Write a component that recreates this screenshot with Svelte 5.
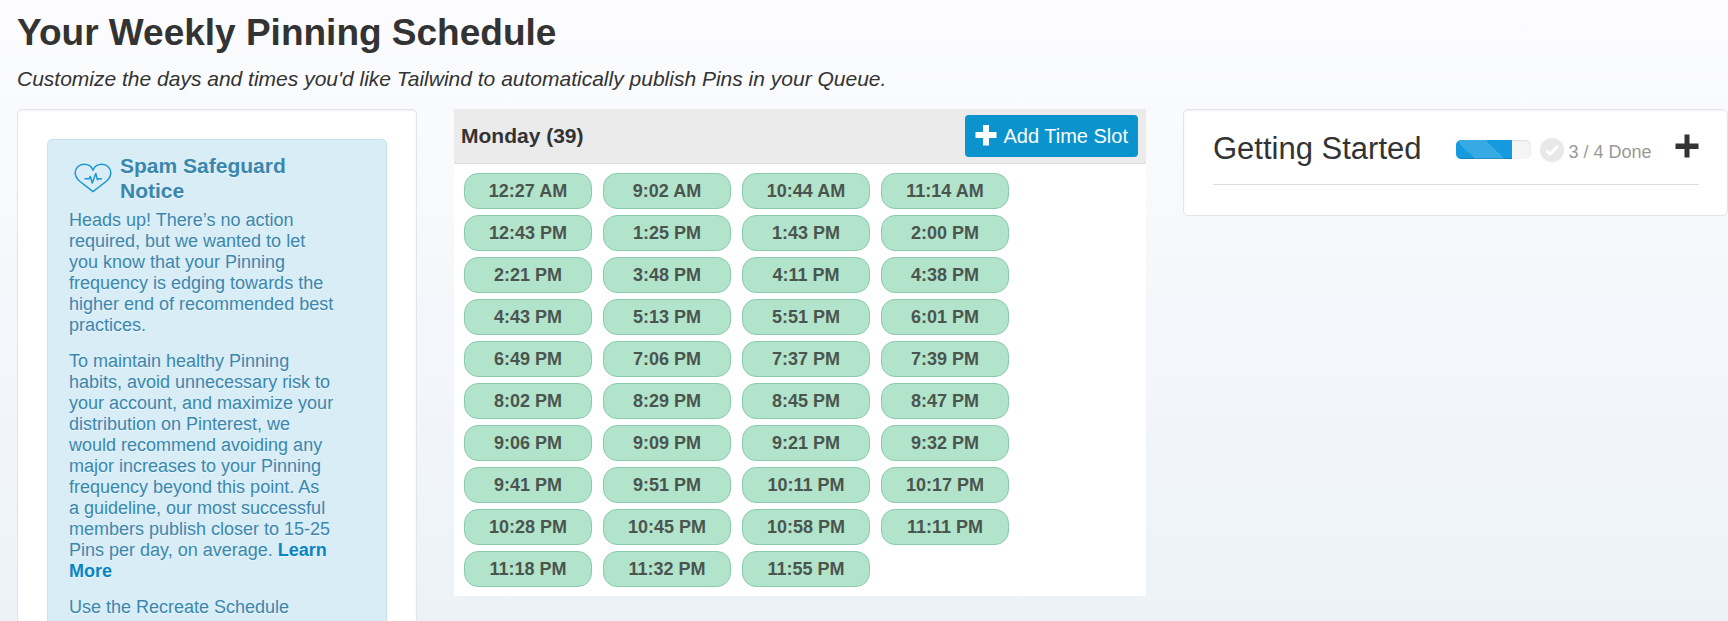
<script>
  const times = [
    '12:27 AM', '9:02 AM', '10:44 AM', '11:14 AM',
    '12:43 PM', '1:25 PM', '1:43 PM', '2:00 PM',
    '2:21 PM', '3:48 PM', '4:11 PM', '4:38 PM',
    '4:43 PM', '5:13 PM', '5:51 PM', '6:01 PM',
    '6:49 PM', '7:06 PM', '7:37 PM', '7:39 PM',
    '8:02 PM', '8:29 PM', '8:45 PM', '8:47 PM',
    '9:06 PM', '9:09 PM', '9:21 PM', '9:32 PM',
    '9:41 PM', '9:51 PM', '10:11 PM', '10:17 PM',
    '10:28 PM', '10:45 PM', '10:58 PM', '11:11 PM',
    '11:18 PM', '11:32 PM', '11:55 PM'
  ];

  let done = 3;
  let total = 4;

  $: percent = (done / total) * 100;
</script>

<main class="page">
  <h1>Your Weekly Pinning Schedule</h1>
  <p class="subtitle">Customize the days and times you'd like Tailwind to automatically publish Pins in your Queue.</p>

  <div class="columns">
    <aside class="card">
      <div class="notice">
        <div class="notice-head">
          <svg class="heart" viewBox="0 0 38 30" aria-hidden="true">
            <path d="M19 28.600L6 18.500C3 16 1.200 13.500 1.200 9.800C1.200 5 5.200 1.300 10 1.300C14.500 1.300 17.700 3.900 19 7.200C20.300 3.900 23.500 1.300 28 1.300C32.800 1.300 36.800 5 36.800 9.800C36.800 13.500 35 16 32 18.500Z" />
            <path d="M10.500 15.800H15L16.300 13.500L18.300 20L21.800 10.500L23.500 16.800L24.500 15.800H28" />
          </svg>
          <h2>Spam Safeguard Notice</h2>
        </div>
        <p>Heads up! There’s no action required, but we wanted to let you know that your Pinning frequency is edging towards the higher end of recommended best practices.</p>
        <p>To maintain healthy Pinning habits, avoid unnecessary risk to your account, and maximize your distribution on Pinterest, we would recommend avoiding any major increases to your Pinning frequency beyond this point. As a&nbsp;guideline, our most successful members publish closer to 15-25 Pins per day, on average. <a href="#learn-more">Learn More</a></p>
        <p>Use the Recreate Schedule</p>
      </div>
    </aside>

    <section class="schedule">
      <header class="day-header">
        <h2>Monday ({times.length})</h2>
        <button class="add-button">
          <svg class="plus" viewBox="0 0 22 22" aria-hidden="true">
            <path d="M8 1h6v7h7.500v6h-7.500v7.500h-6v-7.500h-7.500v-6h7.500z" />
          </svg>
          Add Time Slot
        </button>
      </header>
      <div class="slots">
        {#each times as time}
          <button class="slot">{time}</button>
        {/each}
      </div>
    </section>

    <section class="card started">
      <div class="started-row">
        <h2>Getting Started</h2>
        <div class="progress">
          <div class="bar" style="width: {percent}%"></div>
        </div>
        <div class="status">
          <svg class="check" viewBox="0 0 24 24" aria-hidden="true">
            <circle cx="12" cy="12" r="12" />
            <path d="M6.500 12.500L10 16L18 8" />
          </svg>
          <span>{done} / {total} Done</span>
        </div>
        <button class="expand" aria-label="Expand">
          <svg class="plus" viewBox="0 0 24 24" aria-hidden="true">
            <path d="M9.500 0.500h5v9h9v5.500h-9v8.500h-5v-8.500h-9v-5.500h9z" />
          </svg>
        </button>
      </div>
    </section>
  </div>
</main>

<style>
  :global(body) {
    background: linear-gradient(#fcfcfe, #ecf2f7) fixed;
    overflow: hidden;
  }

  .page {
    box-sizing: border-box;
    height: 100vh;
    overflow: hidden;
    padding: 12px 0 0 17px;
    color: #333;
    font-family: "Liberation Sans", Arial, sans-serif;
    font-size: 18px;
    line-height: 21px;
  }

  h1,
  h2,
  p {
    margin: 0;
  }

  h1 {
    font-size: 37px;
    line-height: 42px;
  }

  .subtitle {
    margin: 14px 0 19px;
    font-size: 21px;
    line-height: 22px;
    font-style: italic;
  }

  .columns {
    display: grid;
    grid-template-columns: 400fr 692fr 545fr;
    gap: 37px;
    align-items: start;
  }

  .card {
    box-sizing: border-box;
    padding: 29px;
    background: #fff;
    border: 1px solid #e2e4e7;
    border-radius: 5px;
    box-shadow: inset 0 1px 2px rgba(0, 0, 0, 0.05);
  }

  .notice {
    padding: 13px 51px 20px 21px;
    background: #d9edf7;
    border: 1px solid #c5e5ec;
    border-radius: 5px;
    color: #3a87ad;
    text-shadow: 0 1px 0 rgba(255, 255, 255, 0.5);
  }

  .notice-head {
    display: flex;
    align-items: center;
    gap: 8px;
    padding-left: 5px;
    margin-bottom: 7px;
  }

  .notice h2 {
    font-size: 21px;
    line-height: 25px;
  }

  .heart {
    flex: none;
    width: 38px;
    height: 30px;
    fill: none;
    stroke: #1b98d0;
    stroke-width: 1.5;
    stroke-linejoin: round;
  }

  .notice p {
    margin-bottom: 15px;
  }

  .notice a {
    color: #0a85c4;
    font-weight: bold;
    text-decoration: none;
  }

  .schedule {
    background: #fff;
  }

  .day-header {
    display: flex;
    align-items: center;
    justify-content: space-between;
    padding: 6px 8px 6px 7px;
    background: #ebebeb;
    border-bottom: 1px solid #ddd;
  }

  .day-header h2 {
    font-size: 21px;
    line-height: 26px;
  }

  button {
    font: inherit;
    cursor: pointer;
  }

  .add-button {
    display: flex;
    align-items: center;
    gap: 6px;
    height: 42px;
    padding: 0 10px;
    background: #0a93cd;
    border: 0;
    border-radius: 4px;
    color: #fff;
    font-size: 20px;
  }

  .add-button .plus {
    width: 22px;
    height: 22px;
    margin-bottom: 3px;
    fill: #fff;
  }

  .slots {
    display: grid;
    grid-template-columns: repeat(4, 128px);
    gap: 6px 11px;
    padding: 9px 10px;
  }

  .slot {
    height: 36px;
    padding: 0;
    background: #b2e3cb;
    border: 1px solid #8bcbad;
    border-radius: 14px;
    color: #4b554f;
    font-size: 18px;
    font-weight: bold;
  }

  .started {
    padding: 20px 28px 30px 29px;
  }

  .started-row {
    display: flex;
    align-items: flex-start;
    padding-bottom: 16px;
    border-bottom: 1px solid #ddd;
  }

  .started h2 {
    flex: none;
    margin-right: 34px;
    font-size: 31px;
    font-weight: normal;
    line-height: 38px;
  }

  .progress {
    flex: none;
    width: 75px;
    height: 19px;
    margin: 10px 9px 0 0;
    overflow: hidden;
    background: #f5f5f5;
    border-radius: 5px;
    box-shadow: inset 0 1px 2px rgba(0, 0, 0, 0.1);
  }

  .bar {
    height: 100%;
    background-color: #149bdf;
    background-image: linear-gradient(
      45deg,
      rgba(255, 255, 255, 0.15) 25%,
      transparent 25%,
      transparent 50%,
      rgba(255, 255, 255, 0.15) 50%,
      rgba(255, 255, 255, 0.15) 75%,
      transparent 75%
    );
    background-size: 60px 60px;
    box-shadow: inset 0 -1px 0 rgba(0, 0, 0, 0.15);
  }

  .status {
    display: flex;
    flex: none;
    align-items: center;
    gap: 5px;
    padding-top: 6px;
    color: #999;
  }

  .status span {
    padding-top: 6px;
  }

  .check {
    width: 24px;
    height: 24px;
    fill: #e8e8e8;
  }

  .check path {
    fill: none;
    stroke: #fff;
    stroke-width: 3;
  }

  .expand {
    display: flex;
    margin-left: auto;
    padding: 4px 0 0;
    background: none;
    border: 0;
  }

  .expand .plus {
    width: 24px;
    height: 24px;
    fill: #333;
  }
</style>
